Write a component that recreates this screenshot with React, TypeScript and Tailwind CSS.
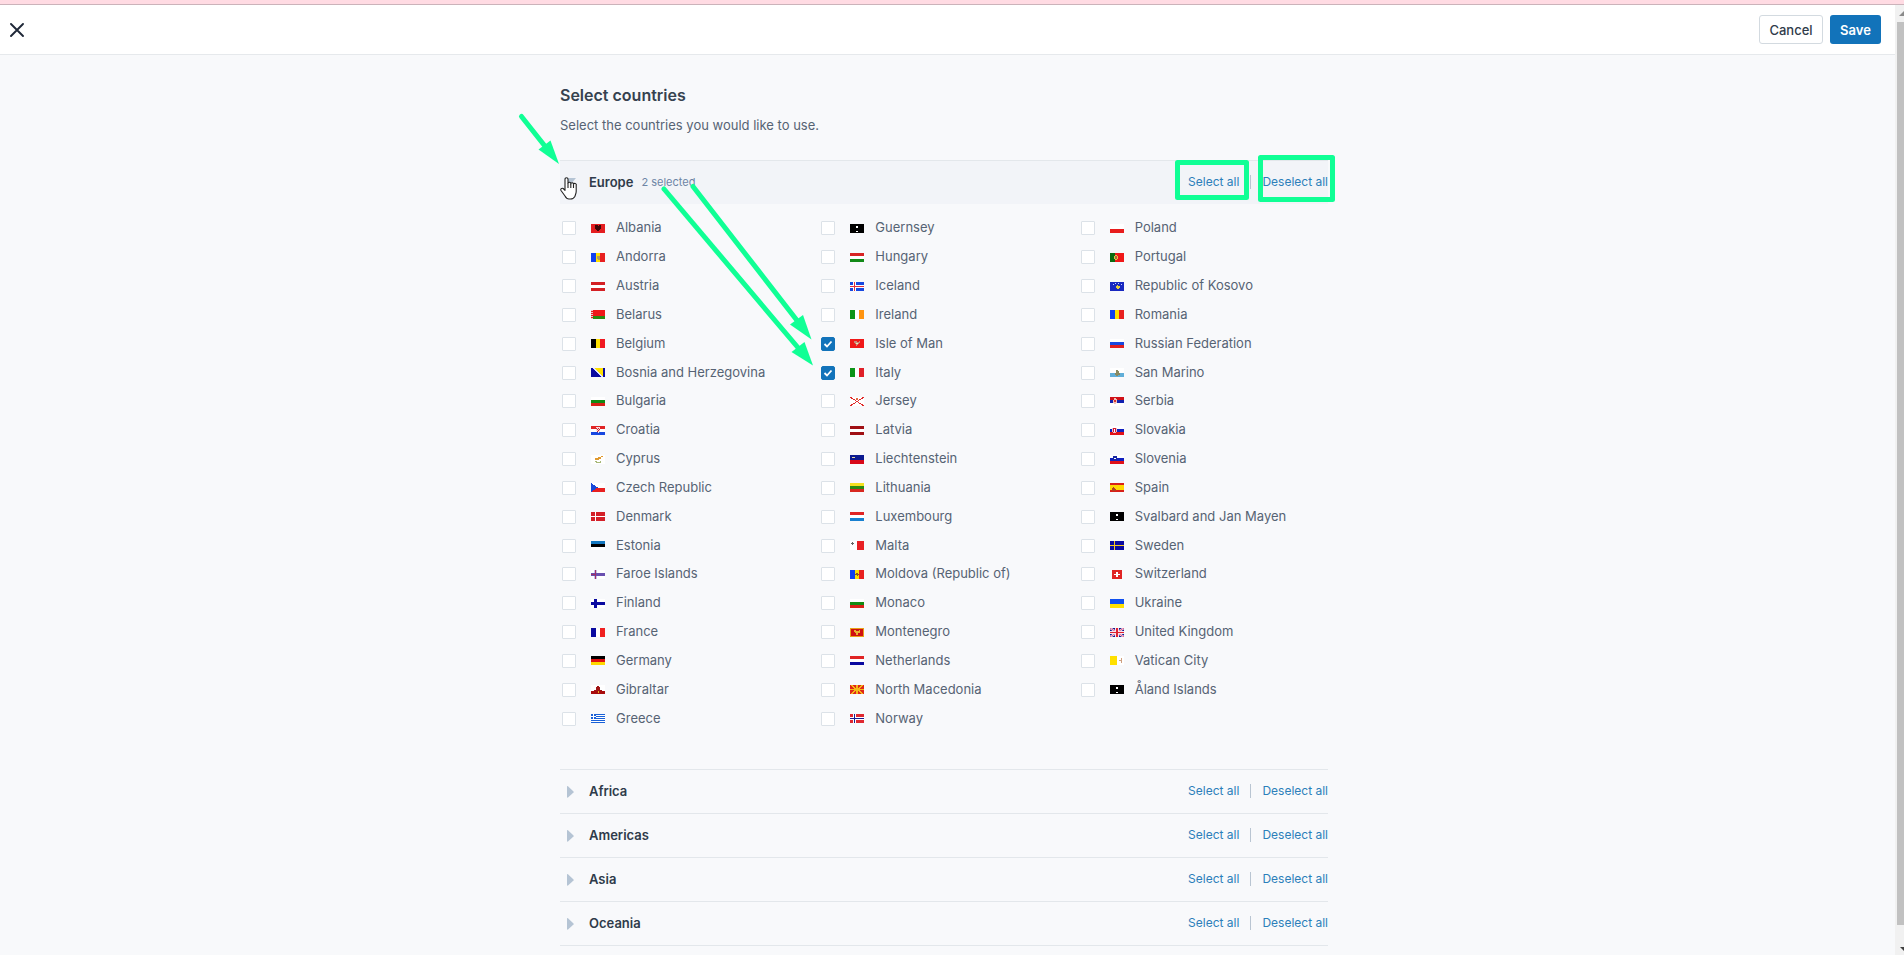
import React, { useState } from 'react';

const NAVY = '#0a0aa0';
const YELLOW = '#ffe000';

const rows = (...colors: string[]) =>
  colors.map((c, i) => (
    <rect key={i} x={0} y={(9 / colors.length) * i} width={14} height={9 / colors.length} fill={c} />
  ));

const cols = (...colors: string[]) =>
  colors.map((c, i) => (
    <rect key={i} x={(14 / colors.length) * i} y={0} width={14 / colors.length} height={9} fill={c} />
  ));

const cross = (bg: string, outer: string, inner?: string) => (
  <>
    <rect width={14} height={9} fill={bg} />
    <path d="M0 3h14v3H0zM3 0h3v9H3z" fill={inner ? outer : 'none'} />
    <path d="M0 4h14v1H0zM4 0h1v9H4z" fill={inner ?? outer} />
  </>
);

const unknownFlag = (
  <>
    <rect width={14} height={9} fill="#000" />
    <path d="M6 2h2v2H6zM6 7h2v1H6z" fill="#fff" />
  </>
);

const flags: Record<string, React.ReactNode> = {
  Albania: <>{rows('#e41e20')}<path d="M4 1h2l1 1 1-1h2v3L9 6 7 7 5 6 4 4z" fill="#400808" /></>,
  Andorra: <>{cols('#1040f0', YELLOW, '#e82020')}<path d="M6 3h3v3l-1 1H7L6 6z" fill="#b09a60" /></>,
  Austria: rows('#d42024', '#fff', '#d42024'),
  Belarus: <>{rows('#f01818', '#f01818', '#2a8a10')}<path d="M0 0h2v9H0z" fill="#f0c8c8" /><path d="M0 1h2v1H0zM0 3h2v1H0zM0 5h2v1H0zM0 7h2v1H0z" fill="#e02020" /></>,
  Belgium: cols('#000', YELLOW, '#f01820'),
  'Bosnia and Herzegovina': <>{rows(NAVY)}<path d="M4 0h8v9z" fill={YELLOW} /><path d="M2 0h1l9 9h-2z" fill="#dfe4ff" /></>,
  Bulgaria: rows('#fff', '#128a12', '#d82018'),
  Croatia: <>{rows('#e02424', '#fff', '#1848e0')}<path d="M5 1h4v4L7 7 5 5z" fill="#f8dada" /><path d="M5 2h1v1H5zM7 2h1v1H7zM6 3h1v1H6zM8 3h1v1H8zM7 4h1v1H7zM6 5h1v1H6z" fill="#d02030" /></>,
  Cyprus: <>{rows('#fff')}<path d="M4 3h3V2h3V1h2v1h-2v2H8v1H4z" fill="#e09a30" /><path d="M4 6h2v1h3V6h1v2H5V7H4z" fill="#a8b878" /></>,
  'Czech Republic': <>{rows('#fff', '#e82020')}<path d="M0 0l7 4.5L0 9z" fill="#1848d8" /></>,
  Denmark: cross('#d42028', '#fff'),
  Estonia: rows('#1478c0', '#000', '#fff'),
  'Faroe Islands': <>{cross('#fff', '#c8c0e8', '#6a3ca0')}<path d="M0 3h14v3H0z" fill="#6a50b0" /><path d="M4 0h1v9H4zM0 4h5v1H0z" fill="#a03068" /></>,
  Finland: <>{rows('#fff')}<path d="M0 3h14v3H0zM3 0h3v9H3z" fill={NAVY} /></>,
  France: cols(NAVY, '#fff', '#f02020'),
  Germany: rows('#000', '#e01010', '#ffd800'),
  Gibraltar: <>{rows('#fff', '#fff', '#a80c0c')}<path d="M3 6V5h2V2h1V1h2v1h1v3h2v1z" fill="#a01414" /><path d="M7 6h1v2H7z" fill="#e8b020" /></>,
  Greece: <>{rows('#fff')}<path d="M0 0h14v1H0zM0 2h14v1H0zM0 4h14v1H0zM0 6h14v1H0zM0 8h14v1H0zM0 0h5v5H0z" fill="#1860d8" /><path d="M2 0h1v5H2zM0 2h5v1H0z" fill="#fff" /></>,
  Guernsey: unknownFlag,
  Hungary: rows('#d82424', '#fff', '#128a18'),
  Iceland: cross('#1848e0', '#fff', '#e03040'),
  Ireland: cols('#0c9418', '#fff', '#ff9410'),
  'Isle of Man': <>{rows('#f01818')}<path d="M4 2h2l1 1 3-1v1L8 5 7 7H6V5L4 4z" fill="#c88a7a" /><path d="M6 4h2v1H6z" fill="#f8e8b0" /></>,
  Italy: cols('#0c9418', '#fff', '#e02028'),
  Jersey: <>{rows('#fff')}<path d="M0 0l14 9M14 0L0 9" stroke="#e02828" strokeWidth={1} /><path d="M6 1h2v2H6z" fill="#e06a40" /></>,
  Latvia: rows('#a01014', '#fff', '#a01014'),
  Liechtenstein: <>{rows('#0c1a90', '#d80818')}<path d="M2 2h3v1H2z" fill="#e8dca0" /></>,
  Lithuania: rows('#f4e020', '#2a8a10', '#d82820'),
  Luxembourg: rows('#e02424', '#fff', '#1880d0'),
  Malta: <>{cols('#fff', '#e82024')}<path d="M2 1h1v3H2zM1 2h3v1H1z" fill="#666" /></>,
  'Moldova (Republic of)': <>{cols('#1040f0', YELLOW, '#e82020')}<path d="M6 3h2v1h1v1H8v1H7V5H5V4h1z" fill="#8a5a20" /></>,
  Monaco: rows('#fff', '#128a12', '#d82018'),
  Montenegro: <>{rows('#e8a018')}<path d="M1 1h12v7H1z" fill="#d01010" /><path d="M4 2l3 1 3-1v3L8 5v2H6V5L4 4z" fill="#e8b030" /></>,
  Netherlands: rows('#e02424', '#fff', NAVY),
  'North Macedonia': <>{rows('#e02818')}<path d="M0 0h2l4 3h2l4-3h2L9 4h5v1H9l5 4h-2L8 6H6L2 9H0l5-4H0V4h5zM6 0h2v9H6z" fill="#f4b818" /></>,
  Norway: cross('#e02830', '#fff', '#1a1a90'),
  Poland: rows('#fff', '#e81c1c'),
  Portugal: <>{rows('#f01818')}<path d="M0 0h5v9H0z" fill="#0c6a10" /><path d="M4 3h1V2h2v1h1v3H7v1H5V6H4z" fill="#e8c840" /><path d="M5 3h2v3H5z" fill="#b06040" /></>,
  'Republic of Kosovo': <>{rows('#1828c0')}<path d="M6 4h1V3h1v1h2v1L8 7H7L6 5z" fill="#e8d040" /><path d="M3 2h1v1H3zM5 1h1v1H5zM8 1h1v1H8zM11 2h1v1h-1z" fill="#c8d0ff" /></>,
  Romania: cols('#1040f0', YELLOW, '#e82020'),
  'Russian Federation': rows('#fff', '#1848e0', '#e02020'),
  'San Marino': <>{rows('#fff', '#60aed8')}<path d="M6 2h2v1h1v2h1v2H8v1H6V7H5V5h1z" fill="#8a8a60" /></>,
  Serbia: <>{rows('#d01018', '#1020b0', '#fff')}<path d="M4 1h2v1h1v4H6v1H4V6H3V3h1z" fill="#f0c0b8" /><path d="M4 3h2v2H4z" fill="#d83030" /></>,
  Slovakia: <>{rows('#fff', '#1020c0', '#e01018')}<path d="M2 2h5v4L5 7H4L2 6z" fill="#e8c0d0" /><path d="M3 2h3v4H3z" fill="#d01830" /><path d="M4 3h1v3H4z" fill="#fff" /></>,
  Slovenia: <>{rows('#fff', '#1020c0', '#e01018')}<path d="M3 1h4v4H6v1H4V5H3z" fill="#1828a0" /><path d="M4 3h2v1H4z" fill="#fff" /></>,
  Spain: <>{rows('#d82018', '#ffd800', '#ffd800', '#d82018')}<path d="M2 5h1V4h1v1h1v1h1v2H2z" fill="#b04020" /></>,
  'Svalbard and Jan Mayen': unknownFlag,
  Sweden: cross(NAVY, '#f8c820'),
  Switzerland: <><path d="M2 0h10v9H2z" fill="#e02424" /><path d="M6 2h2v5H6zM4 4h6v1H4z" fill="#fff" /></>,
  Ukraine: rows('#1050f0', YELLOW),
  'United Kingdom': (
    <>
      {rows('#14148c')}
      <g shapeRendering="auto">
        <path d="M0 0l14 9M14 0L0 9" stroke="#fff" strokeWidth={2} />
        <path d="M0 0l14 9M14 0L0 9" stroke="#d82060" strokeWidth={0.8} />
      </g>
      <path d="M5 0h4v9H5zM0 3h14v3H0z" fill="#f4e4ee" />
      <path d="M6 0h2v9H6zM0 4h14v1H0z" fill="#e02030" />
    </>
  ),
  'Vatican City': <>{cols('#ffe000', '#fff')}<path d="M9 4h2v1H9zM11 2h1v5h-1z" fill="#cfa080" /></>,
  'Åland Islands': unknownFlag,
};

const europe = Object.keys(flags);
const regions = ['Europe', 'Africa', 'Americas', 'Asia', 'Oceania'];

const CountryOption: React.FC<{ name: string; checked: boolean; onToggle: () => void }> = ({ name, checked, onToggle }) => (
  <label className="flex items-center pl-0.5 text-[13px] leading-5 text-[#566374] cursor-pointer">
    <span className="relative flex">
      <input
        type="checkbox"
        checked={checked}
        onChange={onToggle}
        className="peer appearance-none size-3.5 bg-white border border-[#dce2e8] rounded-[1px] checked:bg-[#1273ba] checked:border-[#1273ba] checked:rounded-xs"
      />
      <svg viewBox="0 0 14 14" className="absolute inset-0 size-3.5 hidden peer-checked:block pointer-events-none" fill="none">
        <path d="M3.500 7l2.500 2.500 4.500-5" stroke="#fff" strokeWidth={1.8} />
      </svg>
    </span>
    <svg viewBox="0 0 14 9" className="w-3.5 h-[9px] ml-[15px] mr-[11px] shrink-0" shapeRendering="crispEdges">
      {flags[name]}
    </svg>
    <span className="pb-0.5">{name}</span>
  </label>
);

const Annotations: React.FC = () => (
  <svg className="absolute left-0 top-0 w-[768px] h-[210px] overflow-visible pointer-events-none" viewBox="0 0 768 210" fill="none">
    <g stroke="#10ff95" strokeWidth={5} strokeLinecap="round">
      <path d="M-38.500 -43.500L-12 -10" />
      <path d="M104 29L240 190" />
      <path d="M133 26.500L239 163" />
    </g>
    <g fill="#10ff95">
      <path d="M-1 4l-20.500 -14.500 12 -9z" />
      <path d="M253 205.500l-21.500 -13.500 13 -10z" />
      <path d="M251.500 179.500l-21.500 -15 13 -9.500z" />
    </g>
    <g stroke="#10ff95" strokeWidth={5} strokeLinejoin="round">
      <rect x={617.5} y={2.5} width={69} height={35} />
      <rect x={700.5} y={-2.5} width={72} height={42} />
    </g>
  </svg>
);

const HandCursor: React.FC = () => (
  <svg viewBox="0 0 17 23" className="absolute left-0 top-[17px] w-[17px] h-[23px] pointer-events-none" fill="#fff" stroke="#222" strokeWidth={1.1} strokeLinejoin="round">
    <path d="M5 11.500V2.200a1.500 1.500 0 0 1 3 0V6.500a1.400 1.400 0 0 1 2.800.4a1.300 1.300 0 0 1 2.700.5a1.300 1.300 0 0 1 2.700.8v6c0 2.500-.9 3.300-1.200 5Q13.500 22 10.500 22H9Q6.500 22 5 19L1 13.500C.2 12 1.700 10.700 3.200 11.500L5 13.300z" />
    <path d="M8 6.500V11M10.800 7v4M13.500 7.500V11" fill="none" />
  </svg>
);

export default function App() {
  const [selected, setSelected] = useState<string[]>(['Isle of Man', 'Italy']);
  const [open, setOpen] = useState(true);

  const toggle = (name: string) =>
    setSelected((prev) => (prev.includes(name) ? prev.filter((n) => n !== name) : [...prev, name]));

  return (
    <div className="min-h-screen flex flex-col bg-[#f8f9fb] font-['Inter',sans-serif]">
      <div className="h-[5px] bg-[#ffdbe3] border-b border-[#cbb3ba]" />
      <div className="flex-1 flex">
        <div className="flex-1 flex flex-col">
          <header className="flex items-center justify-between h-[50px] pl-2 pr-3.5 bg-white border-b border-[#e6e9ec]">
            <button aria-label="Close" className="p-0.5">
              <svg viewBox="0 0 14 14" className="size-3.5" stroke="#1f2838" strokeWidth={1.9} strokeLinecap="round">
                <path d="M1 1l12 12M13 1L1 13" />
              </svg>
            </button>
            <div className="flex gap-[7px] text-[13px] leading-5">
              <button className="h-[29px] w-16 rounded-[3px] border border-[#d3dae0] bg-white font-medium text-[#2f3b4a]">Cancel</button>
              <button className="h-[29px] w-[51px] rounded-[3px] bg-[#1273ba] font-semibold text-white">Save</button>
            </div>
          </header>

          <main className="pt-7 pr-[7px]">
            <div className="max-w-[768px] mx-auto">
              <h1 className="text-base leading-6 font-semibold text-[#36424f]">Select countries</h1>
              <p className="mt-2 text-[13px] leading-5 text-[#566374]">Select the countries you would like to use.</p>

              <div className="mt-[25px] border-b border-[#e3e7eb]">
                {regions.map((region) => {
                  const isEurope = region === 'Europe';
                  return (
                    <section key={region} className="relative">
                      <div className={`flex items-center h-11 pb-0.5 border-t border-[#e3e7eb] ${isEurope ? 'bg-[#f2f4f8]' : ''}`}>
                        <button
                          className="flex items-center text-[13px] leading-5 font-semibold text-[#2f3b4a]"
                          onClick={() => isEurope && setOpen(!open)}
                        >
                          <svg viewBox="0 0 14 14" className="size-3.5 ml-[3px] mr-3" fill="#b5c4d4">
                            {isEurope && open ? (
                              <path d="M1 3h12L7 10z" />
                            ) : (
                              <path d="M4 2.500Q4 1.500 5 2.300L10.500 7.400Q11 8 10.500 8.600L5 13.500Q4 14 4 13z" />
                            )}
                          </svg>
                          {region}
                        </button>
                        {isEurope && selected.length > 0 && (
                          <span className="ml-2 text-[11px] leading-5 text-[#6d85a5]">{selected.length} selected</span>
                        )}
                        <div className="ml-auto flex items-center text-[12px] leading-5 text-[#2c7fba]">
                          <button onClick={() => isEurope && setSelected(europe)}>Select all</button>
                          <span className="w-px h-3.5 mx-[11px] bg-[#b9c5d2]" />
                          <button onClick={() => isEurope && setSelected([])}>Deselect all</button>
                        </div>
                      </div>
                      {isEurope && open && (
                        <div className="grid grid-flow-col grid-cols-3 grid-rows-18 gap-x-2.5 h-[519px] mt-2.5 mb-9">
                          {europe.map((name) => (
                            <CountryOption key={name} name={name} checked={selected.includes(name)} onToggle={() => toggle(name)} />
                          ))}
                        </div>
                      )}
                      {isEurope && <HandCursor />}
                      {isEurope && <Annotations />}
                    </section>
                  );
                })}
              </div>
            </div>
          </main>
        </div>

        {/* Scrollbar */}
        <div className="w-[9px] flex flex-col bg-[#f1f1f1] overflow-hidden">
          <svg viewBox="0 0 9 17" className="w-[9px] h-[17px]" fill="#8a8a8a">
            <path d="M4 11l5-5v5z" />
          </svg>
          <div className="flex-1 ml-0.5 bg-[#c1c1c1]" />
          <svg viewBox="0 0 9 30" className="w-[9px] h-[30px]" fill="#404040">
            <path d="M5 22h4v4z" />
          </svg>
        </div>
      </div>
    </div>
  );
}
